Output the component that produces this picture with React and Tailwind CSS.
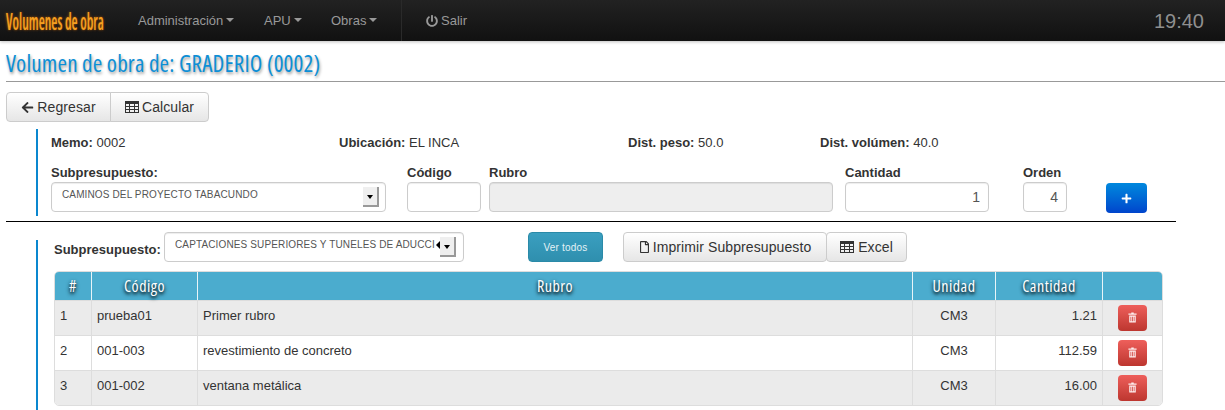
import React from 'react';
import { FaArrowLeft, FaRegFile, FaPlus, FaPowerOff } from 'react-icons/fa';

const sans = { fontFamily: '"Liberation Sans", Arial, sans-serif' };
const condensed = { fontFamily: '"Open Sans", sans-serif' };

const TableIcon = () => (
  <svg width="14" height="12" viewBox="0 0 14 12" fill="none" stroke="currentColor" strokeWidth="1" className="shrink-0">
    <rect x="0.5" y="0.5" width="13" height="11" />
    <path d="M0.5 2H13.5" strokeWidth="2" />
    <path d="M0.5 5.5H13.5M0.5 8.5H13.5M4.5 3V11.5M9.5 3V11.5" />
  </svg>
);

const TrashIcon = () => (
  <svg width="9" height="11" viewBox="0 0 11 13" className="shrink-0" fill="#fdeeee">
    <path d="M4 0.5H7V1.5H10.5V3H0.5V1.5H4Z" />
    <path fillRule="evenodd" d="M1.5 4H9.5V12.5H1.5ZM3 5.5V11H4V5.5ZM5 5.5V11H6V5.5ZM7 5.5V11H8V5.5Z" />
  </svg>
);

const NavItem = ({ label, className }) => (
  <span className={`flex shrink-0 items-center gap-[3px] text-[13px] text-[#999999] ${className}`}>
    {label}
    <span className="mt-[-1px] border-x-[4px] border-t-[4px] border-x-transparent border-t-[#999999]" />
  </span>
);

const ArrowBox = () => (
  <span className="flex h-[20px] w-[16px] items-center justify-center border-r-2 border-b-2 border-[#999999] bg-[#efefef]">
    <span className="mt-[2px] border-x-[3px] border-t-[4px] border-x-transparent border-t-black" />
  </span>
);

const Label = ({ children }) => (
  <label className="block h-[18px] text-[13px] leading-[18px] font-bold text-[#333333]">{children}</label>
);

const inputCls = 'h-[30px] rounded-[4px] border border-[#cccccc] px-[8px] text-[14px] leading-[28px] text-[#555555] shadow-[inset_0_1px_1px_rgba(0,0,0,0.075)]';
const btnCls = 'flex h-[30px] items-center justify-center border border-[#cccccc] bg-gradient-to-b from-white to-[#e6e6e6] text-[14px] tracking-[0.1px] text-[#333333]';

const rows = [
  { n: 1, code: 'prueba01', name: 'Primer rubro', qty: '1.21', bg: 'bg-[#ebebeb]' },
  { n: 2, code: '001-003', name: 'revestimiento de concreto', qty: '112.59', bg: 'bg-white' },
  { n: 3, code: '001-002', name: 'ventana metálica', qty: '16.00', bg: 'bg-[#ebebeb]' },
];

const Th = ({ children, className }) => (
  <div className={`flex h-full items-center justify-center border-r border-[#e8f4f8] last:border-r-0 ${className}`}>
    <span
      className="text-[16px] font-normal tracking-[0.5px] text-white [font-stretch:75%] [text-shadow:0_2px_3px_#0e2a35,0_2px_4px_#16323d]"
      style={condensed}
    >
      {children}
    </span>
  </div>
);

const App = () => {
  return (
    <div className="h-[410px] w-[1225px] overflow-hidden bg-white text-[13px] text-[#333333]" style={sans}>
      {/* barra superior */}
      <nav className="flex h-[41px] items-center bg-gradient-to-b from-[#222222] to-[#111111] shadow-[0_1px_3px_rgba(0,0,0,0.25)]">
        <span className="ml-[6px] w-[97px] shrink-0">
          <span
            className="inline-block origin-left scale-x-[0.58] text-[24px] leading-[41px] font-semibold whitespace-nowrap text-[#f5a021] [font-stretch:75%] [text-shadow:0_0_3px_#c86400]"
            style={condensed}
          >
            Volumenes de obra
          </span>
        </span>
        <NavItem label="Administración" className="ml-[35px] w-[126px]" />
        <NavItem label="APU" className="w-[67px]" />
        <NavItem label="Obras" className="w-[70px]" />
        <div className="h-[41px] w-px bg-[#2a2a2a]" />
        <span className="ml-[24px] flex items-center gap-[3px] text-[13px] text-[#999999]">
          <FaPowerOff className="h-[12px] w-[12px]" /> Salir
        </span>
        <span className="mr-[21px] ml-auto text-[20px] text-[#8f8f8f]">19:40</span>
      </nav>

      {/* titulo */}
      <div className="mt-[8px] ml-[6px] h-[33px] border-b border-[#999999]">
        <h1
          className="text-[23px] leading-[28px] font-medium tracking-[0.16px] text-[#0c8fd6] [font-stretch:75%] [text-shadow:1px_2px_3px_#999999]"
          style={condensed}
        >
          Volumen de obra de: GRADERIO (0002)
        </h1>
      </div>

      <div className="mt-[10px] ml-[6px] flex">
        <button className={`${btnCls} w-[105px] gap-[3px] rounded-l-[4px]`}>
          <FaArrowLeft className="h-[13px] w-[13px]" /> Regresar
        </button>
        <button className={`${btnCls} ml-[-1px] w-[99px] gap-[3px] rounded-r-[4px]`}>
          <TableIcon /> Calcular
        </button>
      </div>

      {/* datos del volumen */}
      <section className="mt-[7px] ml-[36px] h-[87px] border-l-2 border-[#0a87cf] pl-[13px]">
        <div className="flex h-[26px] items-center pt-[2px] text-[13px]">
          <span className="w-[288px]"><b>Memo:</b> 0002</span>
          <span className="w-[289px]"><b>Ubicación:</b> EL INCA</span>
          <span className="w-[192px]"><b>Dist. peso:</b> 50.0</span>
          <span><b>Dist. volúmen:</b> 40.0</span>
        </div>
        <div className="mt-[9px] flex items-start">
          <div className="w-[335px]">
            <Label>Subpresupuesto:</Label>
            <div className={`${inputCls} flex items-center justify-between bg-white pr-[6px] pl-[10px]`}>
              <span className="mt-[-5px] text-[10px] leading-none tracking-[0.13px]">CAMINOS DEL PROYECTO TABACUNDO</span>
              <ArrowBox />
            </div>
          </div>
          <div className="ml-[21px] w-[74px]">
            <Label>Código</Label>
            <div className={`${inputCls} bg-white`} />
          </div>
          <div className="ml-[8px] w-[344px]">
            <Label>Rubro</Label>
            <div className={`${inputCls} bg-[#eeeeee]`} />
          </div>
          <div className="ml-[12px] w-[144px]">
            <Label>Cantidad</Label>
            <div className={`${inputCls} bg-white text-right`}>1</div>
          </div>
          <div className="ml-[34px] w-[44px]">
            <Label>Orden</Label>
            <div className={`${inputCls} bg-white text-right`}>4</div>
          </div>
          <button className="mt-[19px] ml-[39px] flex h-[30px] w-[41px] items-center justify-center rounded-[4px] bg-gradient-to-b from-[#0088dd] to-[#0044cc] text-white">
            <FaPlus className="h-[11px] w-[11px]" />
          </button>
        </div>
      </section>

      <hr className="mt-[5px] ml-[6px] w-[1170px] border-t border-black" />

      {/* subpresupuestos */}
      <section className="mt-[18px] ml-[36px] flex h-[170px] flex-col border-l-2 border-[#0a87cf] pl-[16px]">
        <div className="mt-[-8px] flex h-[30px] shrink-0 items-center">
          <span className="w-[110px] pt-[6px] text-[13px] font-bold">Subpresupuesto:</span>
          <div className={`${inputCls} flex w-[300px] items-center bg-white pr-[7px] pl-[10px]`}>
            <span className="mt-[-5px] w-[266px] overflow-hidden text-[10px] leading-none tracking-[0.13px] whitespace-nowrap">
              CAPTACIONES SUPERIORES Y TUNELES DE ADUCCI
            </span>
            <span className="mt-[-5px] border-y-[4px] border-r-[4px] border-y-transparent border-r-black" />
            <ArrowBox />
          </div>
          <button className="ml-[64px] h-[30px] w-[75px] rounded-[4px] border border-[#2a8aa8] bg-gradient-to-b from-[#3a9fc0] to-[#2f8fae] text-[10px] tracking-[0.2px] text-[#e4f2f6]">
            Ver todos
          </button>
          <button className={`${btnCls} ml-[20px] w-[204px] gap-[3px] rounded-[4px]`}>
            <FaRegFile className="h-[12px] w-[11px]" /> Imprimir Subpresupuesto
          </button>
          <button className={`${btnCls} ml-[-1px] w-[81px] gap-[4px] rounded-[4px]`}>
            <TableIcon /> Excel
          </button>
        </div>

        <div className="mt-[9px] w-[1109px] overflow-hidden rounded-[5px] border border-[#dddddd]">
          <div className="flex h-[28px] bg-[#4bacce]">
            <Th className="w-[37px]">#</Th>
            <Th className="w-[106px]">Código</Th>
            <Th className="w-[715px]">Rubro</Th>
            <Th className="w-[83px]">Unidad</Th>
            <Th className="w-[107px]">Cantidad</Th>
            <Th className="flex-1" />
          </div>
          {rows.map((r) => (
            <div key={r.n} className={`flex h-[35px] border-t border-[#dddddd] text-[13px] ${r.bg}`}>
              <div className="flex w-[37px] items-center border-r border-[#dddddd] pb-[4px] pl-[5px]">{r.n}</div>
              <div className="flex w-[106px] items-center border-r border-[#dddddd] pb-[4px] pl-[5px]">{r.code}</div>
              <div className="flex w-[715px] items-center border-r border-[#dddddd] pb-[4px] pl-[5px]">{r.name}</div>
              <div className="flex w-[83px] items-center justify-center border-r border-[#dddddd] pb-[4px]">CM3</div>
              <div className="flex w-[107px] items-center justify-end border-r border-[#dddddd] pr-[5px] pb-[4px]">{r.qty}</div>
              <div className="flex flex-1 items-center pb-[1px] pl-[15px]">
                <button className="flex h-[26px] w-[29px] items-center justify-center rounded-[4px] bg-gradient-to-b from-[#ee5f5b] to-[#bd362f]">
                  <TrashIcon />
                </button>
              </div>
            </div>
          ))}
        </div>
      </section>
    </div>
  );
};

export default App;
